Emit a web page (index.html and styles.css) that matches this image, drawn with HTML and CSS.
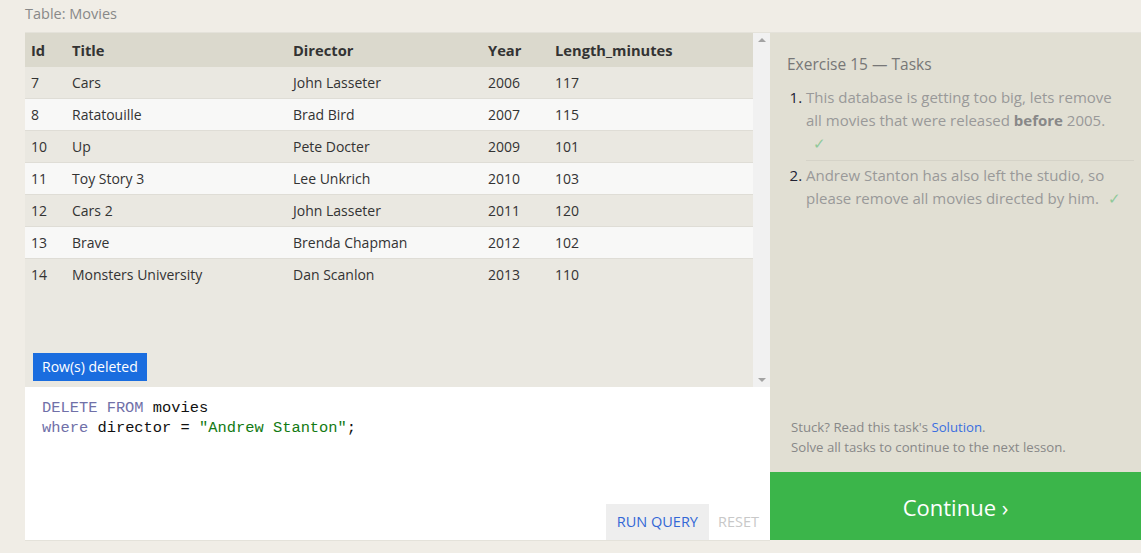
FILE: index.html
```html
<!DOCTYPE html>
<html>
<head>
<meta charset="utf-8">
<link rel="stylesheet" href="styles.css">
</head>
<body>
<div class="page">
  <div class="caption">Table: Movies</div>
  <div class="main">
    <div class="left">
      <div class="results">
        <div class="table-wrap">
          <table class="grid">
            <thead>
              <tr><th class="c-id">Id</th><th class="c-title">Title</th><th class="c-dir">Director</th><th class="c-year">Year</th><th>Length_minutes</th></tr>
            </thead>
            <tbody>
              <tr><td>7</td><td>Cars</td><td>John Lasseter</td><td>2006</td><td>117</td></tr>
              <tr><td>8</td><td>Ratatouille</td><td>Brad Bird</td><td>2007</td><td>115</td></tr>
              <tr><td>10</td><td>Up</td><td>Pete Docter</td><td>2009</td><td>101</td></tr>
              <tr><td>11</td><td>Toy Story 3</td><td>Lee Unkrich</td><td>2010</td><td>103</td></tr>
              <tr><td>12</td><td>Cars 2</td><td>John Lasseter</td><td>2011</td><td>120</td></tr>
              <tr><td>13</td><td>Brave</td><td>Brenda Chapman</td><td>2012</td><td>102</td></tr>
              <tr><td>14</td><td>Monsters University</td><td>Dan Scanlon</td><td>2013</td><td>110</td></tr>
            </tbody>
          </table>
        </div>
        <div class="scrollbar">
          <span class="arrow up"></span>
          <span class="arrow down"></span>
        </div>
        <div class="badge">Row(s) deleted</div>
      </div>
      <div class="editor">
        <pre class="code"><span class="kw">DELETE FROM</span> movies
<span class="kw">where</span> director = <span class="str">"Andrew Stanton"</span>;</pre>
        <div class="actions">
          <span class="btn run">RUN QUERY</span>
          <span class="btn reset">RESET</span>
        </div>
      </div>
    </div>
    <div class="right">
      <div class="tasks">
        <h2 class="tasks-title">Exercise 15 — Tasks</h2>
        <ol class="task-list">
          <li class="task">This database is getting too big, lets remove all movies that were released <b>before</b> 2005. <span class="check check-block">✓</span></li>
          <li class="task">Andrew Stanton has also left the studio, so please remove all movies directed by <span class="nowrap">him. <span class="check">✓</span></span></li>
        </ol>
      </div>
      <div class="help">
        <div>Stuck? Read this task's <a class="link">Solution</a>.</div>
        <div>Solve all tasks to continue to the next lesson.</div>
      </div>
      <div class="continue">Continue ›</div>
    </div>
  </div>
</div>
</body>
</html>
```
FILE: styles.css
```css
html, body {
  margin: 0;
  padding: 0;
  background: #f0ede6;
  font-family: "Open Sans", "Noto Sans", sans-serif;
  color: #333;
}
.page {
  width: 1141px;
  height: 553px;
  box-sizing: border-box;
  padding: 0 0 0 25px;
}
.caption {
  font-size: 14.5px;
  color: #888;
  height: 32px;
  line-height: 28px;
}
.main {
  display: flex;
  height: 508px;
  border-top: 1px solid #e4e2da;
}
.left {
  width: 745px;
  display: flex;
  flex-direction: column;
}
.results {
  position: relative;
  height: 354px;
  background: #eae8e1;
  display: flex;
}
.table-wrap {
  flex: 1;
}
.grid {
  width: 100%;
  border-collapse: collapse;
  font-size: 14px;
}
.grid th {
  background: #dbd9cd;
  text-align: left;
  font-weight: 700;
  color: #333;
  height: 34px;
  padding: 0 6px;
  font-size: 14.7px;
}
.grid td {
  height: 31px;
  padding: 0 6px;
  border-bottom: 1px solid #dfddd6;
  color: #333;
}
.grid tbody tr:nth-child(odd) td { background: #eae8e1; }
.grid tbody tr:nth-child(even) td { background: #f8f8f7; }
.grid tbody tr:last-child td { border-bottom: none; }
.c-id { width: 29px; }
.c-title { width: 209px; }
.c-dir { width: 183px; }
.c-year { width: 55px; }
.scrollbar {
  width: 17px;
  background: #f1f1f1;
  position: relative;
}
.arrow {
  position: absolute;
  left: 5px;
  width: 0;
  height: 0;
  border-left: 4px solid transparent;
  border-right: 4px solid transparent;
}
.arrow.up { top: 5px; border-bottom: 4px solid #a3a3a3; }
.arrow.down { bottom: 5px; border-top: 4px solid #a3a3a3; }
.badge {
  position: absolute;
  left: 8px;
  bottom: 6px;
  background: #1a6ddf;
  color: #fff;
  font-size: 14px;
  height: 28px;
  line-height: 28px;
  padding: 0 9px;
}
.editor {
  flex: 1;
  background: #fff;
  display: flex;
  flex-direction: column;
  border-bottom: 1px solid #e4e2da;
}
.code {
  margin: 0;
  padding: 11px 17px 9px;
  font-family: "Liberation Mono", "DejaVu Sans Mono", monospace;
  font-size: 15.4px;
  line-height: 20px;
  color: #111;
  flex: 1;
}
.kw { color: #7070a8; }
.str { color: #137a13; }
.actions {
  display: flex;
  justify-content: flex-end;
}
.btn {
  font-size: 14.5px;
  height: 36px;
  line-height: 36px;
}
.run {
  background: #eeeeee;
  color: #3367d6;
  padding: 0 11px 0 11px;
}
.reset {
  color: #c8c8c8;
  padding: 0 11px 0 9px;
}
.right {
  flex: 1;
  display: flex;
  flex-direction: column;
  background: #e1dfd3;
  height: 507px;
}
.tasks {
  flex: 1;
  padding: 18px 7px 0 17px;
}
.tasks-title {
  margin: 0;
  font-size: 15.5px;
  font-weight: 400;
  color: #777;
  line-height: 26px;
}
.task-list {
  margin: 9px 0 0 0;
  padding: 0 0 0 19px;
}
.task {
  font-size: 15px;
  line-height: 23px;
  color: #999;
  padding-bottom: 5px;
  padding-right: 8px;
}
.task::marker { color: #223; }
.task + .task {
  border-top: 1px solid #d5d3c8;
  padding-top: 3px;
}
.task b { color: #888; }
.nowrap { white-space: nowrap; }
.check {
  display: inline-block;
  color: #8fc99a;
  margin-left: 5px;
}
.check-block {
  display: block;
  margin-left: 7px;
}
.help {
  padding: 0 10px 15px 21px;
  font-size: 13.2px;
  line-height: 20px;
  color: #888;
}
.link { color: #3a6ee0; }
.continue {
  height: 68px;
  background: #3bb54a;
  color: #fff;
  font-size: 22px;
  line-height: 70px;
  text-align: center;
}
```
